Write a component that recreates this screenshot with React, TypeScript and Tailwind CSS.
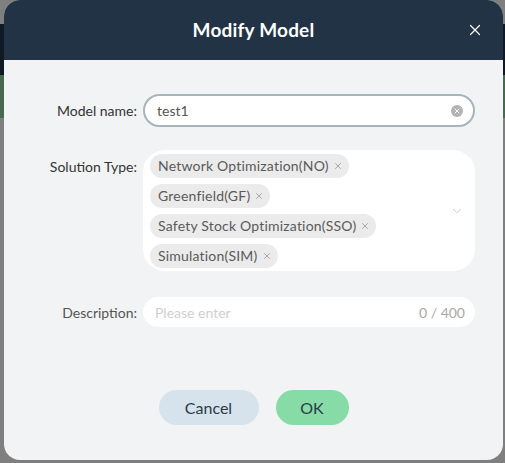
import { X, ChevronDown } from "lucide-react";

const tags = [
  "Network Optimization(NO)",
  "Greenfield(GF)",
  "Safety Stock Optimization(SSO)",
  "Simulation(SIM)",
];

export default function App() {
  return (
    <div className="relative w-[505px] h-[463px] overflow-hidden bg-[#7f7f7f] font-['Lato',sans-serif]">
      {/* page behind the overlay */}
      <div className="h-[24px]" />
      <div className="h-[51px] bg-[#0f1923]" />
      <div className="h-[43px] bg-[#46694f]" />

      {/* modal */}
      <div className="absolute left-[4px] top-0 w-[499px] h-[460px] rounded-[16px] overflow-hidden bg-[#f2f3f5] flex flex-col">
        <div className="h-[60px] bg-[#213345] flex items-center justify-center relative">
          <h2 className="text-white text-[19px] font-bold tracking-[0.2px]">Modify Model</h2>
          <X className="absolute right-[19px] top-[21px] text-white" size={18} strokeWidth={1.6} />
        </div>

        <div className="pt-[34px] pr-[28px] flex flex-col">
          <Row label="Model name" labelClass="text-[#333]">
            <div className="h-[33px] rounded-full border-2 border-[#a8b3ba] bg-white flex items-center pl-[12px] pr-[10px]">
              <span className="flex-1 text-[14px] text-[#555]">test1</span>
              <span className="w-[12px] h-[12px] rounded-full bg-[#b3b3b3] flex items-center justify-center">
                <X size={8} strokeWidth={3} className="text-white" />
              </span>
            </div>
          </Row>

          <Row label="Solution Type" labelClass="text-[#333]" className="mt-[23px]" top>
            <div className="h-[121px] rounded-[22px] bg-white flex items-center pl-[7px] pr-[11px]">
              <div className="flex-1 flex flex-col items-start gap-[6px]">
                {tags.map((t) => (
                  <span
                    key={t}
                    className="h-[24px] rounded-full bg-[#ebebeb] flex items-center pl-[8px] pr-[6px] text-[14px] tracking-[0.2px] text-[#5a5a5a]"
                  >
                    {t}
                    <X size={10} strokeWidth={1.6} className="ml-[4px] text-[#888]" />
                  </span>
                ))}
              </div>
              <ChevronDown size={14} strokeWidth={1.2} className="text-[#b5b5b5]" />
            </div>
          </Row>

          <Row label="Description" labelClass="text-[#555]" className="mt-[26px]">
            <div className="h-[30px] rounded-full bg-white flex items-center pl-[12px] pr-[10px] text-[14px]">
              <span className="flex-1 text-[#cfcfcf]">Please enter</span>
              <span className="text-[#a8a8a8]">0 / 400</span>
            </div>
          </Row>
        </div>

        <div className="mt-[63px] flex justify-center gap-[17px]">
          <button className="w-[100px] h-[35px] rounded-full bg-[#d6e3ec] text-[#2b3a48] text-[16px]">Cancel</button>
          <button className="w-[73px] h-[35px] rounded-full bg-[#86dba6] text-[#2b3a48] text-[16px]">OK</button>
        </div>
      </div>
    </div>
  );
}

function Row({
  label,
  labelClass,
  className = "",
  top = false,
  children,
}: {
  label: string;
  labelClass: string;
  className?: string;
  top?: boolean;
  children: React.ReactNode;
}) {
  return (
    <div className={`flex ${top ? "items-start" : "items-center"} ${className}`}>
      <label className={`w-[139px] shrink-0 text-right pr-[6px] text-[14px] ${labelClass} ${top ? "pt-[6px]" : ""}`}>
        {label}:
      </label>
      <div className="flex-1">{children}</div>
    </div>
  );
}
